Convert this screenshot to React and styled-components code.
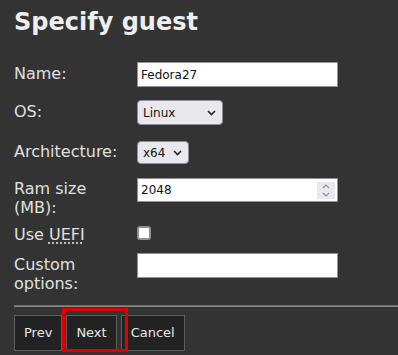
import React from 'react';
import styled, { createGlobalStyle } from 'styled-components';

const GlobalStyle = createGlobalStyle`
  html, body {
    margin: 0;
    padding: 0;
    background: #333333;
  }
  body {
    font-family: "DejaVu Sans", sans-serif;
    color: #e2e2e2;
    overflow: hidden;
  }
`;

const Page = styled.div`
  position: relative;
  padding: 8px 0 0 14px;
  width: 384px;
  height: 347px;
`;

const Title = styled.h1`
  margin: 0 0 26px;
  font-size: 24px;
  font-weight: bold;
  line-height: 28px;
  color: #eeeeee;
`;

const Row = styled.div`
  display: flex;
  align-items: baseline;
  margin-top: ${(p) => p.$top || 0}px;
`;

const Label = styled.label`
  box-sizing: border-box;
  width: 123px;
  padding-right: 12px;
  flex: none;
  font-size: 16px;
  line-height: 19px;
  color: #e0e0e0;
`;

const Abbr = styled.abbr`
  text-decoration: underline dotted;
  text-underline-offset: 3px;
`;

const TextInput = styled.input`
  box-sizing: border-box;
  width: 201px;
  height: ${(p) => p.$h || 25}px;
  margin: 0;
  padding: 0 3px;
  border: 1px solid #8f8f9d;
  border-radius: 0;
  background: #ffffff;
  color: #111;
  font-family: "DejaVu Sans", sans-serif;
  font-size: 12px;
  outline: none;
  -moz-appearance: textfield;
  &::-webkit-inner-spin-button,
  &::-webkit-outer-spin-button {
    -webkit-appearance: none;
    margin: 0;
  }
`;

const NumberWrap = styled.span`
  position: relative;
  display: inline-block;
`;

const Spinner = styled.span`
  position: absolute;
  right: 3px;
  top: 4px;
  width: 18px;
  height: 17px;
  background: #e9e9ed;
  display: flex;
  flex-direction: column;
  align-items: center;
  justify-content: center;
  gap: 3px;
`;

const SelectWrap = styled.span`
  position: relative;
  display: inline-block;
`;

const Select = styled.select`
  box-sizing: border-box;
  appearance: none;
  -webkit-appearance: none;
  width: ${(p) => p.$w}px;
  height: ${(p) => p.$h}px;
  margin: 0;
  padding: 0 0 0 5px;
  border: 1px solid #8f8f9d;
  border-radius: 4px;
  background: #e9e9ed;
  color: #111;
  font-family: "DejaVu Sans", sans-serif;
  font-size: 12px;
  outline: none;
`;

const Chevron = styled.svg`
  position: absolute;
  right: 7px;
  top: 50%;
  margin-top: -3px;
  pointer-events: none;
`;

const Checkbox = styled.input`
  appearance: none;
  -webkit-appearance: none;
  box-sizing: border-box;
  width: 14px;
  height: 14px;
  margin: 0;
  border: 2px solid #8f8f9d;
  border-radius: 3px;
  background: #ffffff;
`;

const Rule = styled.hr`
  margin: ${(p) => p.$top || 0}px 0 0;
  border: none;
  border-top: 1px solid #6a6a6a;
  border-bottom: 1px solid #8a8a8a;
`;

const Buttons = styled.div`
  display: flex;
  gap: 4px;
  margin-top: 8px;
`;

const Button = styled.button`
  box-sizing: border-box;
  height: 36px;
  padding: 0 9px;
  margin: 0;
  border: 1px solid #5c5c5c;
  background: #222222;
  color: #e8e8e8;
  font-family: "DejaVu Sans", sans-serif;
  font-size: 13px;
  cursor: pointer;
`;

const Highlight = styled.div`
  position: absolute;
  left: 62px;
  top: 308px;
  width: 66px;
  height: 44px;
  box-sizing: border-box;
  border: 3px solid #e00000;
  pointer-events: none;
`;

const Arrow = ({ up }) => (
  <svg width="8" height="5" viewBox="0 0 8 5">
    <path
      d={up ? 'M1 4 L4 1 L7 4' : 'M1 1 L4 4 L7 1'}
      fill="none"
      stroke="#8f8f9d"
      strokeWidth="1.2"
    />
  </svg>
);

const Dropdown = ({ w, h, children }) => (
  <SelectWrap>
    <Select $w={w} $h={h}>{children}</Select>
    <Chevron width="9" height="6" viewBox="0 0 9 6">
      <path d="M1 1 L4.5 4.5 L8 1" fill="none" stroke="#222" strokeWidth="1.6" />
    </Chevron>
  </SelectWrap>
);

const App = () => {
  return (
    <Page>
      <GlobalStyle />
      <Title>Specify guest</Title>

      <Row>
        <Label htmlFor="name">Name:</Label>
        <TextInput id="name" type="text" defaultValue="Fedora27" />
      </Row>

      <Row $top={13}>
        <Label>OS:</Label>
        <Dropdown w={86} h={25}>
          <option>Linux</option>
        </Dropdown>
      </Row>

      <Row $top={16}>
        <Label>Architecture:</Label>
        <Dropdown w={52} h={23}>
          <option>x64</option>
        </Dropdown>
      </Row>

      <Row $top={14}>
        <Label htmlFor="ram">Ram size (MB):</Label>
        <NumberWrap>
          <TextInput id="ram" type="number" defaultValue="2048" $h={24} />
          <Spinner>
            <Arrow up />
            <Arrow />
          </Spinner>
        </NumberWrap>
      </Row>

      <Row $top={8}>
        <Label>
          Use <Abbr title="Unified Extensible Firmware Interface">UEFI</Abbr>
        </Label>
        <Checkbox type="checkbox" />
      </Row>

      <Row $top={9}>
        <Label htmlFor="custom">Custom options:</Label>
        <TextInput id="custom" type="text" />
      </Row>

      <Rule $top={12} />

      <Buttons>
        <Button>Prev</Button>
        <Button>Next</Button>
        <Button>Cancel</Button>
      </Buttons>

      <Highlight />
    </Page>
  );
};

export default App;
